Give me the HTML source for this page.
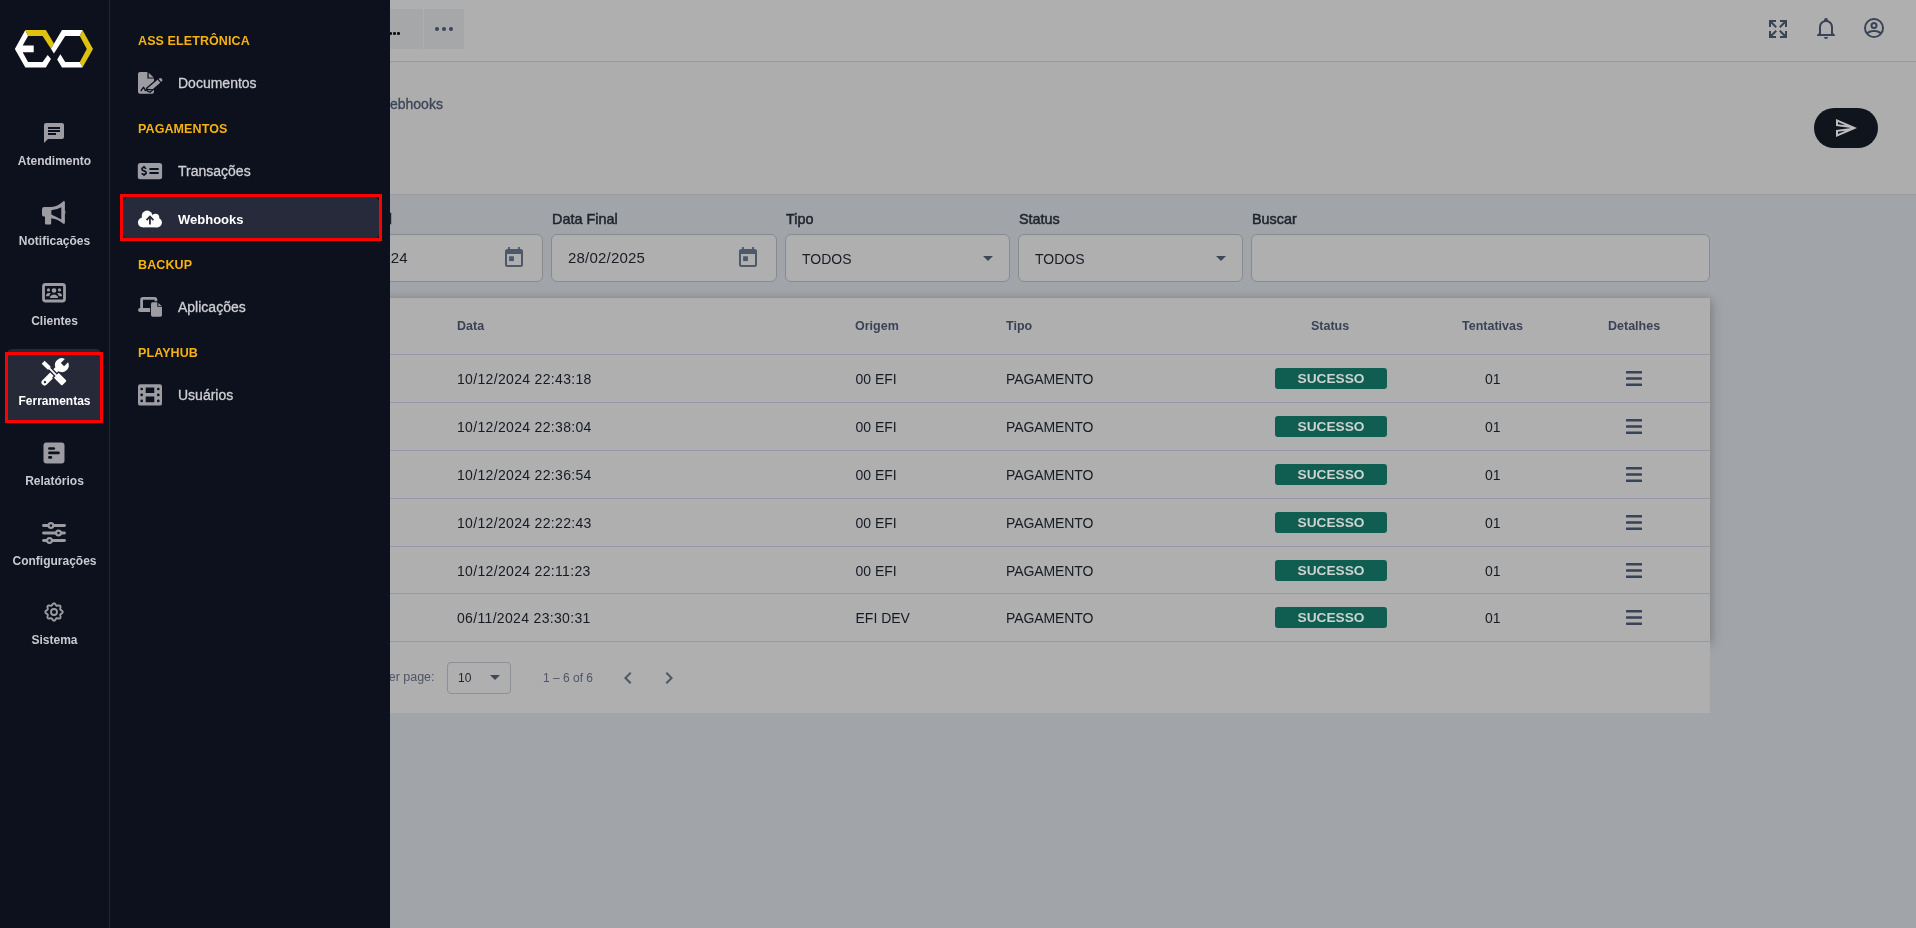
<!DOCTYPE html>
<html><head><meta charset="utf-8">
<style>
*{box-sizing:border-box;margin:0;padding:0}
html,body{width:1916px;height:928px;overflow:hidden;background:#a1a5a9;font-family:"Liberation Sans",sans-serif}
body{will-change:transform}
.a{position:absolute}
.t{position:absolute;line-height:1;white-space:nowrap}
#hdr{position:absolute;left:380px;top:0;width:1536px;height:62px;background:#afafaf;border-bottom:1px solid #999999;box-shadow:0 1px 2px rgba(0,0,0,.1)}
#sub{position:absolute;left:380px;top:62px;width:1536px;height:133px;background:#adadad;border-bottom:1px solid #979ca4}
#filters{position:absolute;left:380px;top:195px;width:1536px;height:733px;background:#a1a5a9}
.inp{position:absolute;top:234px;height:48px;border:1px solid #848b97;border-radius:6px;background:#afafaf}
.lbl{position:absolute;top:212.3px;font-size:14.4px;font-weight:normal;color:#1f232c;line-height:1;-webkit-text-stroke-width:0.5px}
.val{position:absolute;top:250px;font-size:15px;color:#1a1d25;line-height:1;letter-spacing:.2px}
#foot{position:absolute;left:300px;top:641px;width:1410px;height:72px;background:#afafaf}
#card{position:absolute;left:300px;top:298px;width:1410px;height:344px;background:#afafaf;box-shadow:0 -2px 6px rgba(0,0,0,.08),3px 3px 10px rgba(0,0,0,.18)}
.hl{position:absolute;left:300px;width:1410px;height:1px;background:#939aa5}
.th{position:absolute;top:319.5px;font-size:12.5px;font-weight:bold;color:#3a4356;line-height:1}
.td{position:absolute;font-size:14px;color:#161a23;line-height:1}
.chip{position:absolute;left:1275px;width:112px;height:21px;border-radius:3px;background:#105e51;color:#ccd3d0;font-weight:bold;font-size:13.7px;text-align:center;line-height:21px}
.ham{position:absolute;left:1625.8px;width:16px;height:15px}
#rail{position:absolute;left:0;top:0;width:110px;height:928px;background:#0d111d;border-right:1px solid #232733}
#panel{position:absolute;left:110px;top:0;width:280px;height:928px;background:#0d111d}
.rl{position:absolute;left:0;width:109px;text-align:center;font-size:12px;font-weight:bold;color:#c9cacf;line-height:1}
.ri{position:absolute;fill:#9c9ca2}
.sec{position:absolute;left:138px;font-size:12.5px;font-weight:bold;color:#f5b212;line-height:1;letter-spacing:.1px}
.it{position:absolute;left:178px;font-size:14px;color:#cfd0d4;line-height:1;-webkit-text-stroke-width:0.3px;margin-top:-1px}
.pi{position:absolute;fill:#9c9ca2}
</style></head><body>

<!-- HEADER -->
<div id="hdr"></div>
<div class="a" style="left:380px;top:9px;width:43px;height:40px;background:#a6a7a9"></div>
<div class="a" style="left:388.5px;top:32.3px;width:3px;height:3px;background:#151515;border-radius:1px"></div><div class="a" style="left:392.8px;top:32.3px;width:3px;height:3px;background:#151515;border-radius:1px"></div><div class="a" style="left:397.3px;top:32.3px;width:3px;height:3px;background:#151515;border-radius:1px"></div>
<div class="a" style="left:424px;top:9px;width:40px;height:40px;background:#a6a7a9"></div>
<div class="a" style="left:435px;top:27px;width:4px;height:4px;border-radius:50%;background:#3a4256"></div>
<div class="a" style="left:442px;top:27px;width:4px;height:4px;border-radius:50%;background:#3a4256"></div>
<div class="a" style="left:449px;top:27px;width:4px;height:4px;border-radius:50%;background:#3a4256"></div>

<!-- header icons -->
<svg class="a" style="left:1766px;top:17px" width="24" height="24" viewBox="0 0 24 24"><path fill="#3a4256" d="M9.5,13.09L10.91,14.5L6.41,19H10V21H3V14H5V17.59L9.5,13.09M10.91,9.5L9.5,10.91L5,6.41V10H3V3H10V5H6.41L10.91,9.5M14.5,13.09L19,17.59V14H21V21H14V19H17.59L13.09,14.5L14.5,13.09M13.09,9.5L17.59,5H14V3H21V10H19V6.41L14.5,10.91L13.09,9.5Z"/></svg>
<svg class="a" style="left:1814px;top:16px" width="24" height="24" viewBox="0 0 24 24"><path fill="#3a4256" d="M10,21H14A2,2 0 0,1 12,23A2,2 0 0,1 10,21M21,19V20H3V19L5,17V11C5,7.9 7.03,5.17 10,4.29C10,4.19 10,4.1 10,4A2,2 0 0,1 12,2A2,2 0 0,1 14,4C14,4.1 14,4.19 14,4.29C16.97,5.17 19,7.9 19,11V17L21,19M17,11A5,5 0 0,0 12,6A5,5 0 0,0 7,11V18H17V11Z"/></svg>
<svg class="a" style="left:1862px;top:16px" width="24" height="24" viewBox="0 0 24 24"><path fill="#3a4256" d="M12,2A10,10 0 0,0 2,12A10,10 0 0,0 12,22A10,10 0 0,0 22,12A10,10 0 0,0 12,2M12,4A8,8 0 0,1 20,12C20,13.5 19.6,14.9 18.9,16.1C17.5,14.9 15,14 12,14C9,14 6.5,14.9 5.1,16.1C4.4,14.9 4,13.5 4,12A8,8 0 0,1 12,4M12,6A3.5,3.5 0 0,0 8.5,9.5A3.5,3.5 0 0,0 12,13A3.5,3.5 0 0,0 15.5,9.5A3.5,3.5 0 0,0 12,6M12,8A1.5,1.5 0 0,1 13.5,9.5A1.5,1.5 0 0,1 12,11A1.5,1.5 0 0,1 10.5,9.5A1.5,1.5 0 0,1 12,8M12,16C14.4,16 16.4,16.7 17.6,17.7C16.2,19.1 14.2,20 12,20C9.8,20 7.8,19.1 6.4,17.7C7.6,16.7 9.6,16 12,16Z"/></svg>

<!-- SUBHEADER -->
<div id="sub"></div>
<div class="t" style="left:377px;top:96.5px;font-size:14px;color:#3a4558;-webkit-text-stroke-width:0.3px">Webhooks</div>
<div class="a" style="left:1814px;top:108px;width:64px;height:40px;border-radius:20px;background:#10141c"></div>
<svg class="a" style="left:1834px;top:116px" width="24" height="24" viewBox="0 0 24 24"><path fill="#bdbdbd" d="M4,6.03L11.5,9.25L4,8.25L4,6.03M11.5,14.75L4,17.97V15.75L11.5,14.75M2,3V10L17,12L2,14V21L23,12L2,3Z"/></svg>

<!-- FILTERS -->
<div id="filters"></div>
<div class="lbl" style="left:320.8px">Data Inicial</div>
<div class="inp" style="left:318px;width:225px"></div>
<div class="val" style="left:390.8px;letter-spacing:.2px">24</div>
<svg class="a" style="left:505px;top:246.8px" width="18" height="20" viewBox="0 0 18 20"><g fill="#4d586a"><path fill-rule="evenodd" d="M2.5,2H15.5Q18,2 18,4.5V17.5Q18,20 15.5,20H2.5Q0,20 0,17.5V4.5Q0,2 2.5,2ZM2,7.1V17.9H16V7.1Z"/><rect x="3.1" y="0" width="1.8" height="3"/><rect x="13.1" y="0" width="1.8" height="3"/><rect x="4.1" y="9.3" width="4.8" height="4.8"/></g></svg>
<div class="lbl" style="left:552px">Data Final</div>
<div class="inp" style="left:551px;width:226px"></div>
<div class="val" style="left:568px">28/02/2025</div>
<svg class="a" style="left:739px;top:246.8px" width="18" height="20" viewBox="0 0 18 20"><g fill="#4d586a"><path fill-rule="evenodd" d="M2.5,2H15.5Q18,2 18,4.5V17.5Q18,20 15.5,20H2.5Q0,20 0,17.5V4.5Q0,2 2.5,2ZM2,7.1V17.9H16V7.1Z"/><rect x="3.1" y="0" width="1.8" height="3"/><rect x="13.1" y="0" width="1.8" height="3"/><rect x="4.1" y="9.3" width="4.8" height="4.8"/></g></svg>
<div class="lbl" style="left:786px">Tipo</div>
<div class="inp" style="left:785px;width:225px"></div>
<div class="val" style="left:802px;top:251.5px;font-size:14px;letter-spacing:0">TODOS</div>
<div class="a" style="left:983px;top:256px;width:0;height:0;border-left:5px solid transparent;border-right:5px solid transparent;border-top:5px solid #3f4859"></div>
<div class="lbl" style="left:1019px">Status</div>
<div class="inp" style="left:1018px;width:225px"></div>
<div class="val" style="left:1035px;top:251.5px;font-size:14px;letter-spacing:0">TODOS</div>
<div class="a" style="left:1216px;top:256px;width:0;height:0;border-left:5px solid transparent;border-right:5px solid transparent;border-top:5px solid #3f4859"></div>
<div class="lbl" style="left:1252px">Buscar</div>
<div class="inp" style="left:1251px;width:459px"></div>

<!-- TABLE -->
<div id="card"></div>
<div id="foot"></div>
<div class="th" style="left:457px">Data</div>
<div class="th" style="left:855px">Origem</div>
<div class="th" style="left:1006px">Tipo</div>
<div class="th" style="left:1311px">Status</div>
<div class="th" style="left:1462px">Tentativas</div>
<div class="th" style="left:1608px">Detalhes</div>
<div class="hl" style="top:354px"></div>
<div class="hl" style="top:402px"></div>
<div class="hl" style="top:450px"></div>
<div class="hl" style="top:498px"></div>
<div class="hl" style="top:546px"></div>
<div class="hl" style="top:593px"></div>
<div class="hl" style="top:641px"></div>

<div class="td" style="left:457px;top:371.8px;letter-spacing:.33px">10/12/2024 22:43:18</div>
<div class="td" style="left:855.5px;top:371.8px">00 EFI</div>
<div class="td" style="left:1006px;top:371.8px;letter-spacing:-.1px">PAGAMENTO</div>
<div class="chip" style="top:367.5px">SUCESSO</div>
<div class="td" style="left:1485px;top:371.8px">01</div>
<svg class="ham" style="top:370.9px" viewBox="0 0 16 15"><g fill="#3a4256"><rect x="0" y="0" width="16" height="2.5" rx="0.6"/><rect x="0" y="6.2" width="16" height="2.5" rx="0.6"/><rect x="0" y="12.4" width="16" height="2.5" rx="0.6"/></g></svg>
<div class="td" style="left:457px;top:419.8px;letter-spacing:.33px">10/12/2024 22:38:04</div>
<div class="td" style="left:855.5px;top:419.8px">00 EFI</div>
<div class="td" style="left:1006px;top:419.8px;letter-spacing:-.1px">PAGAMENTO</div>
<div class="chip" style="top:415.5px">SUCESSO</div>
<div class="td" style="left:1485px;top:419.8px">01</div>
<svg class="ham" style="top:418.9px" viewBox="0 0 16 15"><g fill="#3a4256"><rect x="0" y="0" width="16" height="2.5" rx="0.6"/><rect x="0" y="6.2" width="16" height="2.5" rx="0.6"/><rect x="0" y="12.4" width="16" height="2.5" rx="0.6"/></g></svg>
<div class="td" style="left:457px;top:467.8px;letter-spacing:.33px">10/12/2024 22:36:54</div>
<div class="td" style="left:855.5px;top:467.8px">00 EFI</div>
<div class="td" style="left:1006px;top:467.8px;letter-spacing:-.1px">PAGAMENTO</div>
<div class="chip" style="top:463.5px">SUCESSO</div>
<div class="td" style="left:1485px;top:467.8px">01</div>
<svg class="ham" style="top:466.9px" viewBox="0 0 16 15"><g fill="#3a4256"><rect x="0" y="0" width="16" height="2.5" rx="0.6"/><rect x="0" y="6.2" width="16" height="2.5" rx="0.6"/><rect x="0" y="12.4" width="16" height="2.5" rx="0.6"/></g></svg>
<div class="td" style="left:457px;top:515.8px;letter-spacing:.33px">10/12/2024 22:22:43</div>
<div class="td" style="left:855.5px;top:515.8px">00 EFI</div>
<div class="td" style="left:1006px;top:515.8px;letter-spacing:-.1px">PAGAMENTO</div>
<div class="chip" style="top:511.5px">SUCESSO</div>
<div class="td" style="left:1485px;top:515.8px">01</div>
<svg class="ham" style="top:514.9px" viewBox="0 0 16 15"><g fill="#3a4256"><rect x="0" y="0" width="16" height="2.5" rx="0.6"/><rect x="0" y="6.2" width="16" height="2.5" rx="0.6"/><rect x="0" y="12.4" width="16" height="2.5" rx="0.6"/></g></svg>
<div class="td" style="left:457px;top:563.8px;letter-spacing:.33px">10/12/2024 22:11:23</div>
<div class="td" style="left:855.5px;top:563.8px">00 EFI</div>
<div class="td" style="left:1006px;top:563.8px;letter-spacing:-.1px">PAGAMENTO</div>
<div class="chip" style="top:559.5px">SUCESSO</div>
<div class="td" style="left:1485px;top:563.8px">01</div>
<svg class="ham" style="top:562.9px" viewBox="0 0 16 15"><g fill="#3a4256"><rect x="0" y="0" width="16" height="2.5" rx="0.6"/><rect x="0" y="6.2" width="16" height="2.5" rx="0.6"/><rect x="0" y="12.4" width="16" height="2.5" rx="0.6"/></g></svg>
<div class="td" style="left:457px;top:610.8px;letter-spacing:.33px">06/11/2024 23:30:31</div>
<div class="td" style="left:855.5px;top:610.8px">EFI DEV</div>
<div class="td" style="left:1006px;top:610.8px;letter-spacing:-.1px">PAGAMENTO</div>
<div class="chip" style="top:606.5px">SUCESSO</div>
<div class="td" style="left:1485px;top:610.8px">01</div>
<svg class="ham" style="top:609.9px" viewBox="0 0 16 15"><g fill="#3a4256"><rect x="0" y="0" width="16" height="2.5" rx="0.6"/><rect x="0" y="6.2" width="16" height="2.5" rx="0.6"/><rect x="0" y="12.4" width="16" height="2.5" rx="0.6"/></g></svg>

<!-- pagination -->
<div class="t" style="left:347px;top:670.5px;font-size:12.5px;color:#4d5666">Rows per page:</div>
<div class="a" style="left:447px;top:662px;width:64px;height:32px;border:1px solid #8b919a;border-radius:4px"></div>
<div class="t" style="left:458px;top:671.5px;font-size:12px;color:#1f232c">10</div>
<div class="a" style="left:490px;top:675px;width:0;height:0;border-left:5px solid transparent;border-right:5px solid transparent;border-top:5px solid #3f4859"></div>
<div class="t" style="left:543px;top:671.5px;font-size:12px;color:#4d5666">1 – 6 of 6</div>
<svg class="a" style="left:616px;top:666px" width="24" height="24" viewBox="0 0 24 24"><path fill="#4d5666" d="M15.41,16.58L10.83,12L15.41,7.41L14,6L8,12L14,18L15.41,16.58Z"/></svg>
<svg class="a" style="left:657px;top:666px" width="24" height="24" viewBox="0 0 24 24"><path fill="#4d5666" d="M8.59,16.58L13.17,12L8.59,7.41L10,6L16,12L10,18L8.59,16.58Z"/></svg>

<!-- RAIL -->
<div id="rail"></div>
<svg class="a" style="left:14px;top:29px" width="80" height="40" viewBox="14 29 80 40">
<polygon fill="#fff" points="25.36,30.12 14.85,49 25.36,67.57 45.84,67.57 50.96,58.95 47.72,54.9 42.6,61.9 28.05,61.9 22.66,52.21 33.71,52.21 33.71,45.48 22.66,45.48 28.05,36.05"/>
<polygon fill="#e0c20e" points="25.36,30.12 45.84,30.12 53.92,43.6 50.96,48.7 42.6,36.05 28.05,36.05"/>
<polygon fill="#fff" points="62.0,30.12 82.5,30.12 79.8,36.05 65.2,36.05 53.92,53.56 50.96,48.71"/>
<polygon fill="#e0c20e" points="82.5,30.12 93.0,49 82.5,67.57 79.8,61.9 86.8,49 79.8,36.05"/>
<polygon fill="#fff" points="82.5,67.57 62.0,67.57 57.15,59.49 60.39,54.37 65.2,61.9 79.8,61.9"/>
</svg>

<div class="a" style="left:7px;top:349px;width:94px;height:72px;border-radius:5px;background:#262a38"></div>
<div class="a" style="left:5px;top:352px;width:98px;height:71px;border:3px solid #ff0000"></div>
<div class="rl" style="top:154.84px;color:#c9cacf">Atendimento</div>
<div class="rl" style="top:234.84px;color:#c9cacf">Notificações</div>
<div class="rl" style="top:314.84px;color:#c9cacf">Clientes</div>
<div class="rl" style="top:394.84px;color:#ffffff">Ferramentas</div>
<div class="rl" style="top:474.84px;color:#c9cacf">Relatórios</div>
<div class="rl" style="top:554.84px;color:#c9cacf">Configurações</div>
<div class="rl" style="top:633.84px;color:#c9cacf">Sistema</div>
<svg class="a" style="left:0;top:0" width="110" height="700" viewBox="0 0 110 700">
<g fill="#9c9ca2">
<path transform="translate(42,121)" d="M20,2H4A2,2 0 0,0 2,4V22L6,18H20A2,2 0 0,0 22,16V4C22,2.89 21.1,2 20,2M6,9H18V11H6M14,14H6V12H14M18,8H6V6H18" fill-rule="evenodd"/>
<path d="M42,209.2Q42,207 44.2,207H51.2V216.6H44.2Q42,216.6 42,214.4Z"/>
<path d="M45,216H51.2V223.6Q51.2,224.6 50.2,224.6H46Q45,224.6 45,223.6Z"/>
<path fill-rule="evenodd" d="M51,207Q58.5,206.2 63.3,201.2Q64.9,200.8 64.9,202.5V222.5Q64.9,224.5 63,223.6Q58.5,219.2 51,218.2ZM51.2,210.3Q57.2,209.8 61.3,207.3V219.4Q57.2,217 51.2,214.4Z"/>
<path d="M64.5,210Q66.6,212.3 64.5,214.8Z"/>
<rect x="43.5" y="284.5" width="21" height="16.5" rx="2" fill="none" stroke="#9c9ca2" stroke-width="2.8"/>
<circle cx="54" cy="290.5" r="2.3"/><circle cx="48.5" cy="289.9" r="1.6"/><circle cx="59.5" cy="289.9" r="1.6"/>
<path d="M49.9,298C49.9,293.2 58.1,293.2 58.1,298Z"/>
<path d="M45.9,296.2Q46.2,293 49.2,293H51Q49.6,294 49.2,296.2Z"/>
<path d="M62.1,296.2Q61.8,293 58.8,293H57Q58.4,294 58.8,296.2Z"/>
<rect x="43.5" y="442.5" width="21" height="21" rx="3"/>

</g>
<path d="M62.70,612.00 L62.67,612.27 L62.57,612.54 L62.41,612.79 L62.19,613.04 L61.94,613.26 L61.67,613.46 L61.39,613.65 L61.11,613.83 L60.86,613.99 L60.64,614.16 L60.46,614.33 L60.33,614.51 L60.25,614.70 L60.21,614.92 L60.22,615.17 L60.26,615.44 L60.32,615.74 L60.39,616.06 L60.46,616.39 L60.51,616.73 L60.53,617.06 L60.51,617.38 L60.44,617.68 L60.32,617.94 L60.15,618.15 L59.94,618.32 L59.68,618.44 L59.38,618.51 L59.06,618.53 L58.73,618.51 L58.39,618.46 L58.06,618.39 L57.74,618.32 L57.44,618.26 L57.17,618.22 L56.92,618.21 L56.70,618.25 L56.51,618.33 L56.33,618.46 L56.16,618.64 L55.99,618.86 L55.83,619.11 L55.65,619.39 L55.46,619.67 L55.26,619.94 L55.04,620.19 L54.79,620.41 L54.54,620.57 L54.27,620.67 L54.00,620.70 L53.73,620.67 L53.46,620.57 L53.21,620.41 L52.96,620.19 L52.74,619.94 L52.54,619.67 L52.35,619.39 L52.17,619.11 L52.01,618.86 L51.84,618.64 L51.67,618.46 L51.49,618.33 L51.30,618.25 L51.08,618.21 L50.83,618.22 L50.56,618.26 L50.26,618.32 L49.94,618.39 L49.61,618.46 L49.27,618.51 L48.94,618.53 L48.62,618.51 L48.32,618.44 L48.06,618.32 L47.85,618.15 L47.68,617.94 L47.56,617.68 L47.49,617.38 L47.47,617.06 L47.49,616.73 L47.54,616.39 L47.61,616.06 L47.68,615.74 L47.74,615.44 L47.78,615.17 L47.79,614.92 L47.75,614.70 L47.67,614.51 L47.54,614.33 L47.36,614.16 L47.14,613.99 L46.89,613.83 L46.61,613.65 L46.33,613.46 L46.06,613.26 L45.81,613.04 L45.59,612.79 L45.43,612.54 L45.33,612.27 L45.30,612.00 L45.33,611.73 L45.43,611.46 L45.59,611.21 L45.81,610.96 L46.06,610.74 L46.33,610.54 L46.61,610.35 L46.89,610.17 L47.14,610.01 L47.36,609.84 L47.54,609.67 L47.67,609.49 L47.75,609.30 L47.79,609.08 L47.78,608.83 L47.74,608.56 L47.68,608.26 L47.61,607.94 L47.54,607.61 L47.49,607.27 L47.47,606.94 L47.49,606.62 L47.56,606.32 L47.68,606.06 L47.85,605.85 L48.06,605.68 L48.32,605.56 L48.62,605.49 L48.94,605.47 L49.27,605.49 L49.61,605.54 L49.94,605.61 L50.26,605.68 L50.56,605.74 L50.83,605.78 L51.08,605.79 L51.30,605.75 L51.49,605.67 L51.67,605.54 L51.84,605.36 L52.01,605.14 L52.17,604.89 L52.35,604.61 L52.54,604.33 L52.74,604.06 L52.96,603.81 L53.21,603.59 L53.46,603.43 L53.73,603.33 L54.00,603.30 L54.27,603.33 L54.54,603.43 L54.79,603.59 L55.04,603.81 L55.26,604.06 L55.46,604.33 L55.65,604.61 L55.83,604.89 L55.99,605.14 L56.16,605.36 L56.33,605.54 L56.51,605.67 L56.70,605.75 L56.92,605.79 L57.17,605.78 L57.44,605.74 L57.74,605.68 L58.06,605.61 L58.39,605.54 L58.73,605.49 L59.06,605.47 L59.38,605.49 L59.68,605.56 L59.94,605.68 L60.15,605.85 L60.32,606.06 L60.44,606.32 L60.51,606.62 L60.53,606.94 L60.51,607.27 L60.46,607.61 L60.39,607.94 L60.32,608.26 L60.26,608.56 L60.22,608.83 L60.21,609.08 L60.25,609.30 L60.33,609.49 L60.46,609.67 L60.64,609.84 L60.86,610.01 L61.11,610.17 L61.39,610.35 L61.67,610.54 L61.94,610.74 L62.19,610.96 L62.41,611.21 L62.57,611.46 L62.67,611.73Z" fill="none" stroke="#9c9ca2" stroke-width="1.9" stroke-linejoin="round"/><circle cx="54" cy="612" r="3" fill="none" stroke="#9c9ca2" stroke-width="1.8"/>
<g fill="#0d111d">
<rect x="48.1" y="447.2" width="7" height="2.6" rx="1.3"/>
<rect x="48.1" y="451.6" width="11.7" height="2.7" rx="1.3"/>
<rect x="48.1" y="456" width="4.1" height="2.7" rx="1.3"/>
</g>
<g stroke="#9c9ca2" stroke-width="2.8" stroke-linecap="round" fill="none">
<line x1="43.5" y1="525.5" x2="64.5" y2="525.5"/><line x1="43.5" y1="533" x2="64.5" y2="533"/><line x1="43.5" y1="540.5" x2="64.5" y2="540.5"/>
</g>
<g stroke="#9c9ca2" stroke-width="2.2" fill="#0d111d">
<circle cx="50.9" cy="525.5" r="2.4"/><circle cx="58.5" cy="533" r="2.4"/><circle cx="49.5" cy="540.5" r="2.4"/>
</g>
<g transform="translate(54,373) rotate(45)">
<path fill="#fff" fill-rule="evenodd" d="M-3.1,-5V13.3A3.1,3.1 0 0,0 3.1,13.3V-5A6.8,6.8 0 0,0 2.3,-17.6V-12H-2.3V-17.6A6.8,6.8 0 0,0 -3.1,-5ZM-1.2,12.8a1.2,1.2 0 1,0 2.4,0a1.2,1.2 0 1,0 -2.4,0Z"/>
<path fill="#fff" stroke="#262a38" stroke-width="1.4" d="M-16,-1.8Q-16,-2.8 -15,-2.8H-7L-5.5,-1.6H2.5V-3.8Q2.5,-4.1 3,-4.1H13.4Q15.2,-4.1 15.2,-2.3V2.3Q15.2,4.1 13.4,4.1H3Q2.5,4.1 2.5,3.8V1.6H-5.5L-7,2.8H-15Q-16,2.8 -16,1.8Z"/>
</g>
</svg>

<!-- PANEL -->
<div id="panel"></div>
<div class="a" style="left:123px;top:197px;width:256px;height:42px;border-radius:5px;background:#262a3a"></div>
<div class="a" style="left:120px;top:194px;width:262px;height:47px;border:3px solid #ff0000"></div>
<div class="sec" style="top:34.62px">ASS ELETRÔNICA</div>
<div class="sec" style="top:122.52px">PAGAMENTOS</div>
<div class="sec" style="top:258.62px">BACKUP</div>
<div class="sec" style="top:346.52px">PLAYHUB</div>
<div class="it" style="top:76.55px;color:#cfd0d4;font-weight:normal">Documentos</div>
<div class="it" style="top:164.75px;color:#cfd0d4;font-weight:normal">Transações</div>
<div class="it" style="top:213.20px;color:#ffffff;font-weight:bold;font-size:13px;margin-top:0;-webkit-text-stroke-width:0">Webhooks</div>
<div class="it" style="top:300.35px;color:#cfd0d4;font-weight:normal;margin-top:0">Aplicações</div>
<div class="it" style="top:388.15px;color:#cfd0d4;font-weight:normal;margin-top:0">Usuários</div>
<svg class="a" style="left:110px;top:0" width="80" height="420" viewBox="110 0 80 420">
<g fill="#9c9ca2">
<path d="M140,72H147.4V78.6H154V91.8Q154,93.8 152,93.8H140Q138,93.8 138,91.8V74Q138,72 140,72Z"/>
<path d="M148.7,72.7L153.7,77.4H148.7Z"/>
<g transform="translate(155.5,84.2) rotate(-40.4)"><path stroke="#0d111d" stroke-width="1.3" d="M-9.4,-2.7H6.4Q9,-2.7 9,0Q9,2.7 6.4,2.7H-9.4L-10.6,0Z"/><rect x="4.6" y="-3" width="1.2" height="6" fill="#0d111d"/></g>
<rect x="137.8" y="163" width="24.3" height="16.2" rx="2.5"/>
<path d="M142.9,297.1H154.6Q157.3,297.1 157.3,299.8V301.2H154.6V299.8H143V307.9H150.1V312H140Q138,312 138,310V309.9Q138,307.9 140.2,307.9V299.8Q140.2,297.1 142.9,297.1Z"/>
<path d="M152.6,302.3H157.3V306.7H162V315.1Q162,316.7 160.4,316.7H152.6Q151,316.7 151,315.1V303.9Q151,302.3 152.6,302.3Z"/>
<path d="M158.4,302.9L161.6,306H158.4Z"/>
<path fill-rule="evenodd" d="M140.2,384.3H159.8Q162,384.3 162,386.5V403.4Q162,405.6 159.8,405.6H140.2Q138,405.6 138,403.4V386.5Q138,384.3 140.2,384.3ZM145.7,387.6V393H154.3V387.6ZM145.7,396.6V402.2H154.3V396.6Z"/>
<g fill="#0d111d"><circle cx="141.7" cy="389" r="1.35"/><circle cx="141.7" cy="394.9" r="1.35"/><circle cx="141.7" cy="400.9" r="1.35"/><circle cx="158.3" cy="389" r="1.35"/><circle cx="158.3" cy="394.9" r="1.35"/><circle cx="158.3" cy="400.9" r="1.35"/></g>
</g>
<g fill="#0d111d">
<path d="M140.8,91L143.6,87.2L145.4,90.6L147.6,89.4L152.8,89.8" stroke="#0d111d" stroke-width="1.3" fill="none" stroke-linejoin="round"/>
<path d="M146,168.7Q145.2,167.5 143.9,167.5Q141.9,167.5 141.9,169.2Q141.9,170.5 144,170.9Q146.2,171.3 146.2,172.8Q146.2,174.4 144,174.4Q142.6,174.4 141.8,173.2" stroke="#0d111d" stroke-width="1.6" fill="none"/>
<rect x="143.3" y="165.9" width="1.5" height="2"/><rect x="143.3" y="174" width="1.5" height="1.9"/>
<rect x="149.2" y="168.1" width="9.7" height="1.8" rx="0.9"/>
<rect x="149.2" y="172.1" width="9.7" height="1.8" rx="0.9"/>
</g>
<g fill="#fff"><circle cx="147.1" cy="216" r="5.4"/><circle cx="155.5" cy="217.6" r="3.8"/><circle cx="142.9" cy="222.4" r="4.95"/><circle cx="157.1" cy="222.6" r="4.85"/><rect x="142.9" y="217" width="14.2" height="10.35"/></g>
<g stroke="#262a3a" stroke-width="1.8" fill="none"><line x1="149.95" y1="224.4" x2="149.95" y2="217"/><polyline points="146.5,220.1 149.95,216.6 153.4,220.1"/></g>
</svg>

</body></html>
